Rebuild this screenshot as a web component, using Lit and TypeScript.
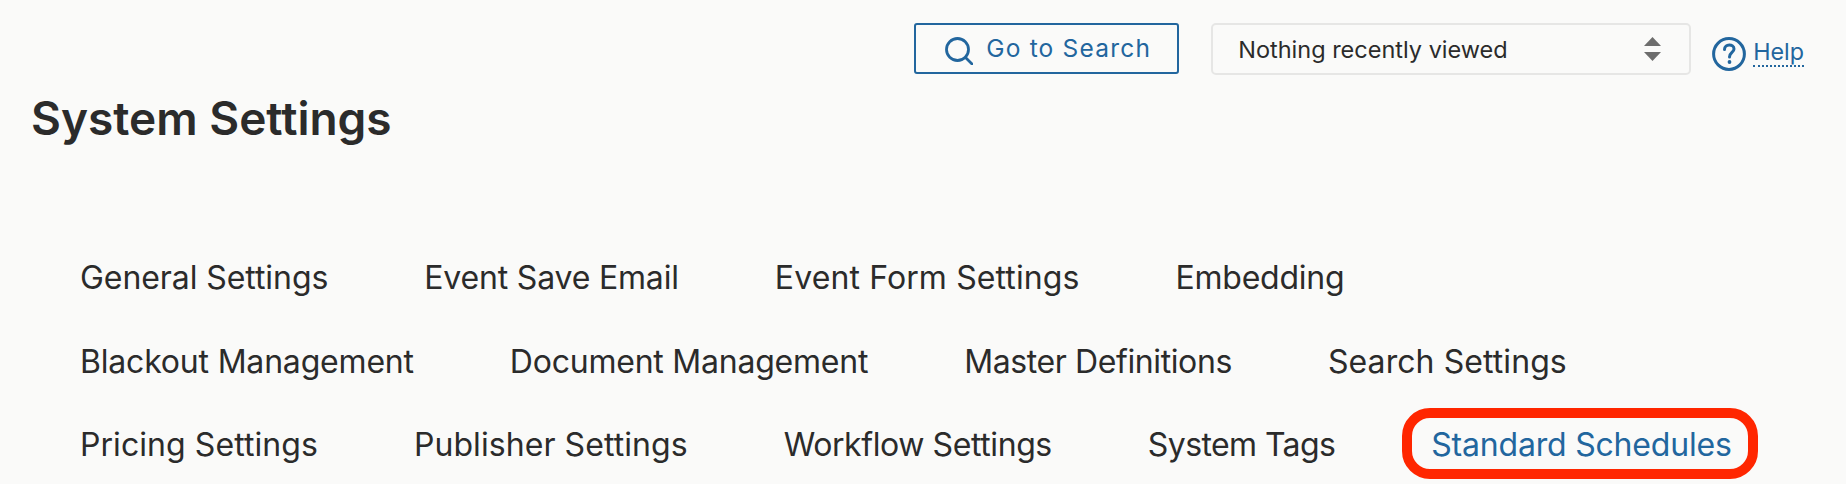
import { LitElement, html, css } from "lit";
import { customElement } from "lit/decorators.js";

// track: small letter-spacing per label, the reference face runs a bit differently from Inter
const ROWS = [
  [
    { label: "General Settings", track: -0.07 },
    { label: "Event Save Email", track: -0.18 },
    { label: "Event Form Settings", track: 0.12 },
    { label: "Embedding", track: -0.26 },
  ],
  [
    { label: "Blackout Management", track: -0.19 },
    { label: "Document Management", track: -0.23 },
    { label: "Master Definitions", track: -0.39 },
    { label: "Search Settings", track: 0.08 },
  ],
  [
    { label: "Pricing Settings", track: 0.07 },
    { label: "Publisher Settings", track: 0.07 },
    { label: "Workflow Settings", track: -0.41 },
    { label: "System Tags", track: -0.6 },
    { label: "Standard Schedules", track: -0.2 },
  ],
];

@customElement("app-root")
export class AppRoot extends LitElement {
  static styles = css`
    :host {
      display: block;
      height: 484px;
      overflow: hidden;
      background: #fafaf9;
      color: #2b2b2b;
      font-family: Inter, "Liberation Sans", sans-serif;
    }
    .top {
      display: flex;
      justify-content: flex-end;
      align-items: flex-start;
      padding: 23px 42px 0 0;
      height: 52px;
    }
    .search {
      display: flex;
      align-items: center;
      gap: 13px;
      box-sizing: border-box;
      width: 265px;
      height: 51px;
      padding: 0 0 2px 29px;
      border: 2px solid #22669e;
      border-radius: 3px;
      color: #22669e;
      font-size: 24.5px;
      letter-spacing: 1.2px;
    }
    .search svg {
      margin-top: 7px;
    }
    .select {
      display: flex;
      align-items: center;
      justify-content: space-between;
      box-sizing: border-box;
      width: 480px;
      height: 52px;
      margin-left: 32px;
      padding: 0 28px 0 25px;
      border: 2px solid #e6e6e5;
      border-radius: 5px;
      font-size: 23.5px;
    }
    .arrows {
      display: block;
    }
    .help {
      display: flex;
      align-items: center;
      gap: 7px;
      margin: 14px 0 0 21px;
      color: #22669e;
      font-size: 23.3px;
    }
    .help span {
      line-height: 26px;
      margin-bottom: 3px;
      border-bottom: 2px dotted #22669e;
    }
    h1 {
      margin: 18px 0 0 31px;
      font-size: 46px;
      line-height: 50px;
      font-weight: 600;
    }
    .rows {
      display: flex;
      flex-direction: column;
      gap: 45.6px;
      margin-top: 116px;
      padding-left: 80px;
    }
    .row {
      display: flex;
      gap: 96px;
      font-size: 32px;
      line-height: 38px;
    }
    .active {
      position: relative;
      color: #22669e;
    }
    .active::after {
      content: "";
      position: absolute;
      inset: -18px -26px -15px -29px;
      border: 10px solid #ff2600;
      border-radius: 28px;
    }
  `;

  render() {
    return html`
      <div class="top">
        <div class="search">
          <svg width="28" height="28" viewBox="0 0 28 28" fill="none" stroke="#22669e" stroke-width="2.8">
            <circle cx="12.5" cy="12.5" r="11"></circle>
            <path d="M20.5 20.5 L27 27" stroke-linecap="round"></path>
          </svg>
          Go to Search
        </div>
        <div class="select">
          Nothing recently viewed
          <svg class="arrows" width="17" height="24" viewBox="0 0 17 24" fill="#6d6d6d">
            <path d="M8.5 0 L17 9 H0 Z"></path>
            <path d="M0 15 H17 L8.5 24 Z"></path>
          </svg>
        </div>
        <div class="help">
          <svg width="34" height="34" viewBox="0 0 34 34" fill="none" stroke="#22669e" stroke-width="3">
            <circle cx="17" cy="17" r="15.4"></circle>
            <path d="M12.5 12.5 C12.5 6.5 22 6.5 22 12 C22 15.5 17.5 15.5 17.5 20" stroke-linecap="round"></path>
            <circle cx="17.5" cy="25" r="1.9" fill="#22669e" stroke="none"></circle>
          </svg>
          <span>Help</span>
        </div>
      </div>
      <h1>System Settings</h1>
      <div class="rows">
        ${ROWS.map(
          (row) => html`
            <div class="row">
              ${row.map(
                (item) => html`<div
                  class=${item.label === "Standard Schedules" ? "active" : ""}
                  style="letter-spacing: ${item.track}px"
                >
                  ${item.label}
                </div>`
              )}
            </div>
          `
        )}
      </div>
    `;
  }
}
